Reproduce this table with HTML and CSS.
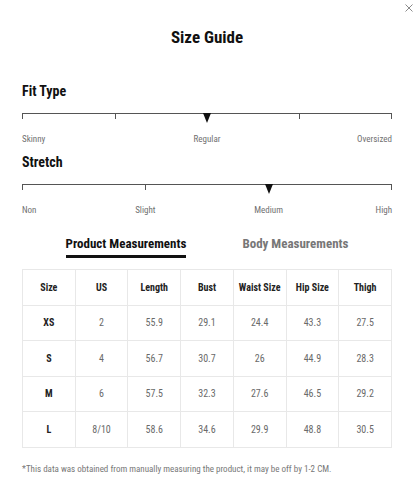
FILE: index.html
```html
<!DOCTYPE html>
<html lang="en">
<head>
<meta charset="utf-8">
<title>Size Guide</title>
<link rel="stylesheet" href="styles.css">
</head>
<body>
<div class="modal">
  <button class="close" aria-label="Close">
    <svg width="8" height="8" viewBox="0 0 8 8"><path d="M0.5 0.5 L7.5 7.5 M7.5 0.5 L0.5 7.5" stroke="#8a8a8a" stroke-width="1" fill="none"/></svg>
  </button>
  <h1 class="title">Size Guide</h1>

  <section class="scale">
    <h2 class="scale-title">Fit Type</h2>
    <div class="track">
      <span class="seg s1"></span><span class="seg s2"></span><span class="seg s1 last"></span>
      <span class="marker m-half"></span>
    </div>
    <div class="labels labels-fit">
      <span class="l-start">Skinny</span>
      <span class="l-mid">Regular</span>
      <span class="l-end">Oversized</span>
    </div>
  </section>

  <section class="scale scale-stretch">
    <h2 class="scale-title">Stretch</h2>
    <div class="track">
      <span class="seg s1"></span><span class="seg s2 last"></span>
      <span class="marker m-two-thirds"></span>
    </div>
    <div class="labels labels-stretch">
      <span class="l-non">Non</span>
      <span class="l-slight">Slight</span>
      <span class="l-medium">Medium</span>
      <span class="l-high">High</span>
    </div>
  </section>

  <div class="tabs">
    <span class="tab active">Product Measurements</span>
    <span class="tab">Body Measurements</span>
  </div>

  <table class="sizes">
    <thead>
      <tr><th>Size</th><th>US</th><th>Length</th><th>Bust</th><th>Waist Size</th><th>Hip Size</th><th>Thigh</th></tr>
    </thead>
    <tbody>
      <tr><th>XS</th><td>2</td><td>55.9</td><td>29.1</td><td>24.4</td><td>43.3</td><td>27.5</td></tr>
      <tr><th>S</th><td>4</td><td>56.7</td><td>30.7</td><td>26</td><td>44.9</td><td>28.3</td></tr>
      <tr><th>M</th><td>6</td><td>57.5</td><td>32.3</td><td>27.6</td><td>46.5</td><td>29.2</td></tr>
      <tr><th>L</th><td>8/10</td><td>58.6</td><td>34.6</td><td>29.9</td><td>48.8</td><td>30.5</td></tr>
    </tbody>
  </table>

  <p class="note">*This data was obtained from manually measuring the product, it may be off by 1-2 CM.</p>
</div>
</body>
</html>
```

FILE: styles.css
```css
* { box-sizing: border-box; }
html, body { margin: 0; padding: 0; background: #fff; }
body {
  font-family: "Liberation Sans Narrow", "Arial Narrow", "Roboto Condensed", "Liberation Sans", Arial, sans-serif;
  color: #111;
}
.modal {
  position: relative;
  width: 417px;
  height: 500px;
  padding: 28px 25px 0 22px;
}
.close {
  position: absolute;
  top: 3px;
  right: 3px;
  border: 0;
  background: none;
  padding: 0;
  width: 10px;
  height: 10px;
  display: flex;
  align-items: center;
  justify-content: center;
}
.title {
  margin: 0;
  text-align: center;
  font-size: 17px;
  line-height: 18px;
  font-weight: bold;
}
.scale { margin-top: 37px; }
.scale-stretch { margin-top: 9px; }
.scale-title {
  margin: 0;
  font-size: 14px;
  line-height: 16px;
  font-weight: bold;
}
.track {
  position: relative;
  display: flex;
  margin-top: 14px;
  height: 6px;
  border-top: 1px solid #555;
}
.seg { border-left: 1px solid #555; height: 5px; }
.seg.last { border-right: 1px solid #555; }
.s1 { flex: 1; }
.s2 { flex: 2; }
.marker {
  position: absolute;
  top: -1px;
  width: 0;
  height: 0;
  border-left: 4px solid transparent;
  border-right: 4px solid transparent;
  border-top: 10px solid #111;
  transform: translateX(-50%);
}
.m-half { left: 50%; }
.m-two-thirds { left: 66.67%; }
.labels {
  display: grid;
  margin-top: 14px;
  font-size: 9px;
  line-height: 12px;
  color: #707070;
}
.labels-fit { grid-template-columns: 1fr auto 1fr; }
.l-start { justify-self: start; }
.l-mid { justify-self: center; }
.l-end { justify-self: end; }
.labels-stretch { grid-template-columns: repeat(6, 1fr); }
.l-non { grid-column: 1; justify-self: start; }
.l-slight { grid-column: 2 / span 2; justify-self: center; }
.l-medium { grid-column: 4 / span 2; justify-self: center; }
.l-high { grid-column: 6; justify-self: end; }

.tabs {
  display: flex;
  justify-content: center;
  gap: 56px;
  margin-top: 20px;
  font-size: 13px;
  line-height: 16px;
  font-weight: bold;
}
.tab { color: #777; padding-bottom: 3px; border-bottom: 3px solid transparent; }
.tab.active { color: #111; border-bottom-color: #111; }

.sizes {
  margin-top: 11px;
  width: 370px;
  table-layout: fixed;
  border-collapse: collapse;
  border: 1px solid #e8e8e8;
  font-size: 10px;
}
.sizes th, .sizes td {
  border: 1px solid #e8e8e8;
  height: 35.5px;
  padding: 0;
  text-align: center;
  vertical-align: middle;
}
.sizes th { font-weight: bold; color: #222; }
.sizes td { color: #6a6a6a; }
.note {
  margin: 15px 0 0;
  font-size: 9px;
  line-height: 12px;
  color: #777;
}
```
